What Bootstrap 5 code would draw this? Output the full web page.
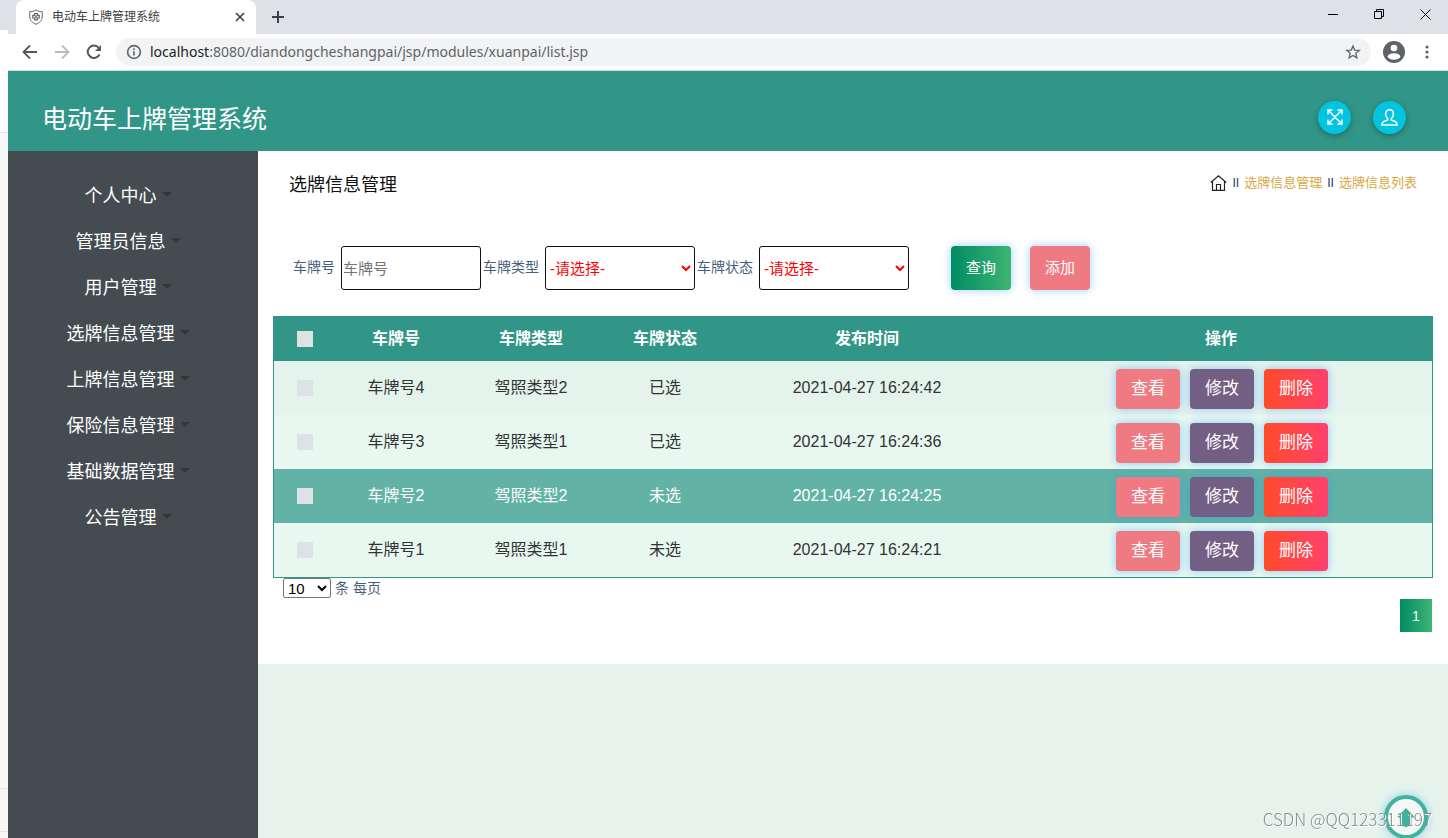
<!DOCTYPE html>
<html lang="zh-CN">
<head>
<meta charset="utf-8">
<meta name="viewport" content="width=device-width, initial-scale=1">
<title>电动车上牌管理系统</title>
<link href="https://cdn.jsdelivr.net/npm/bootstrap@5.3.0/dist/css/bootstrap.min.css" rel="stylesheet">
<style>
:root { --teal: #319687; --dark: #444c51; --mint: #e6f3ec; --slate: #475f7b; }
body { font-family: "Liberation Sans", "Noto Sans CJK SC", sans-serif; font-size: 14px; line-height: 20px; color: var(--slate); background: #fff; overflow: hidden; }
button { border: 0; background: none; padding: 0; }
a { text-decoration: none; }
svg { display: block; }

/* window behind, showing at the left edge */
.edge-strip { width: 8px; background: #f5f7f9; }
.edge-top { height: 30px; background: #dee1e6; }
.edge-mid { height: 103px; background: #fff; border-bottom: 1px solid #e3e5e8; }
.edge-low { height: 44px; margin-bottom: 6px; border-top: 1px solid #e0e2e4; border-bottom: 1px solid #e0e2e4; }

/* browser frame */
.tab-strip { height: 34px; background: #dee1e6; }
.page-tab { width: 240px; margin-left: 8px; padding: 0 11px 0 12px; background: #fff; border-radius: 8px 8px 0 0; font-size: 12px; color: #3c4043; }
.win-btn { width: 46px; height: 29px; display: grid; place-items: center; }
.tool-row { height: 36px; padding: 0 15px 0 14px; background: #fff; }
.address-box { height: 28px; border-radius: 14px; background: #f1f3f4; font-family: "Noto Sans", sans-serif; padding: 0 10px; margin: 0 8px 0 14px; }
.address-box span { font-size: 14px; color: #5f6368; }
.address-box b { font-weight: 400; color: #202124; }

/* application */
.app-head { height: 81px; background: var(--teal); border-top: 1px solid #d5dcdd; padding: 0 42px 0 34px; }
.app-title { font-size: 25px; line-height: 36px; color: #fff; margin: 16px 0 0; font-weight: 400; }
.head-tools { gap: 22px; }
.round-btn { width: 33px; height: 33px; border-radius: 50%; background: #00c4e0; box-shadow: 0 2px 6px rgba(0,0,0,.3); display: grid; place-items: center; margin-top: 12px; }
.side-menu { width: 250px; background: var(--dark); padding-top: 22px; }
.side-menu a { height: 46px; color: #fff; font-size: 18px; line-height: 46px; padding-right: 10px; }
.side-menu a::after { color: #31383b; margin-left: 5px; border-top-width: 5px; border-left-width: 5px; border-right-width: 5px; }
.main-area { background: var(--mint); }
.content-panel { background: #fff; padding: 20px 15px 32px; }
.panel-title { font-size: 18px; line-height: 28px; font-weight: 400; color: #111; margin: 0; }
.crumbs { font-size: 13px; line-height: 24px; color: #1c3b6b; padding-right: 16px; gap: 5px; }
.crumbs a { color: #d9a740; }
.search-row { margin-top: 47px; padding-left: 20px; height: 44px; }
.search-row label { padding-bottom: 2px; }
.field-box { height: 44px; border: 1px solid #111; border-radius: 3px; font-size: 15px; background: #fff; margin: 0 2px 0 6px; }
.field-box::placeholder { color: #757575; }
.text-field { width: 140px; padding: 1px; }
.pick-field { width: 150px; color: red; }
.search-acts { gap: 19px; padding-left: 40px; }
.row-acts { gap: 10px; padding-left: 2px; }
.act-btn { color: #fff; border-radius: 4px; box-shadow: 0 0 8px rgba(30,144,255,.45); }
.act-btn.top-size { width: 60px; height: 44px; font-size: 15px; }
.act-btn.row-size { width: 64px; height: 40px; font-size: 17px; }
.fill-green { background: linear-gradient(90deg, #008b63, #3fb573); }
.fill-pink { background: #f07a82; }
.fill-plum { background: #735f84; }
.fill-red { background: linear-gradient(90deg, #ff4b2b, #ff416c); }
.plate-table { table-layout: fixed; width: 100%; border: 1px solid var(--teal); border-collapse: separate; border-spacing: 0; margin-top: 26px; font-size: 16px; line-height: 24px; color: #333; text-align: center; }
.plate-table th { background: var(--teal); color: #fff; height: 44px; padding: 0; }
.plate-table td { height: 54px; padding: 0; background: #e8f8f0; }
.plate-table td:last-child { padding: 8px 0 6px; }
.plate-table tr.odd-row td { background: #e5f3ed; }
.plate-table tr.hot-row td { background: #62b3a5; color: #fff; }
.plate-table input { appearance: none; display: block; width: 16px; height: 16px; background: #dee1e6; margin: 0 auto; }
.pager-size { padding-left: 10px; }
.size-pick { height: 20px; width: 48px; border: 1px solid #767676; border-radius: 2px; background: #fff; color: #000; font-size: 15px; line-height: 18px; }
.page-num { width: 32px; height: 33px; color: #fff; margin: 1px 1px 0 0; }
.to-top { position: fixed; right: 20px; bottom: -1px; width: 44px; height: 44px; border-radius: 50%; border: 4px solid #40b39c; background: #f5f7f5; box-shadow: 0 0 8px rgba(30,144,255,.45); display: grid; place-items: center; }
.stamp { position: fixed; right: 16px; bottom: 8px; font-family: "Noto Sans CJK SC", sans-serif; font-size: 17px; font-weight: 300; line-height: 22px; color: #858c8b; text-shadow: 1px 1px 0 #fff; }
</style>
</head>
<body>
<div class="d-flex vh-100">
  <div class="edge-strip flex-shrink-0 d-flex flex-column"><div class="edge-top"></div><div class="edge-mid"></div><div class="edge-low mt-auto"></div></div>
  <div class="flex-grow-1 d-flex flex-column">

    <div class="tab-strip d-flex">
      <div class="page-tab d-flex align-items-center">
        <svg width="16" height="16" viewBox="0 0 16 16" fill="none" stroke="#5f6368"><path d="M8 .8C6 2.300 4 2.700 1.800 2.700V8c0 3.600 2.800 5.800 6.200 7.300 3.400-1.500 6.200-3.700 6.200-7.300V2.700C12 2.700 10 2.300 8 .8z"/><path d="M6.700 4.500h2.600v1.900h1.900V9H9.300v1.900H6.700V9H4.800V6.400h1.900z" stroke-width="1.200"/><circle cx="8" cy="7.700" r=".8"/></svg>
        <span class="ms-2">电动车上牌管理系统</span>
        <button class="ms-auto" aria-label="关闭标签"><svg width="10" height="10" viewBox="0 0 10 10" stroke="#3c4043" stroke-width="1.600"><path d="M1 1l8 8M9 1l-8 8"/></svg></button>
      </div>
      <button class="ms-3" aria-label="新标签"><svg width="12" height="12" viewBox="0 0 12 12" stroke="#3c4043" stroke-width="2"><path d="M6 0v12M0 6h12"/></svg></button>
      <div class="ms-auto d-flex">
        <button class="win-btn" aria-label="最小化"><svg width="11" height="11" viewBox="0 0 11 11" stroke="#000"><path d="M0 5.500h10"/></svg></button>
        <button class="win-btn" aria-label="还原"><svg width="11" height="11" viewBox="0 0 11 11" fill="none" stroke="#000"><path d="M.5 2.500h7v7h-7zM2.500 2.500v-2h7v7h-2"/></svg></button>
        <button class="win-btn" aria-label="关闭"><svg width="11" height="11" viewBox="0 0 11 11" stroke="#000"><path d="M.5.5l10 10M10.500.5l-10 10"/></svg></button>
      </div>
    </div>

    <div class="tool-row d-flex align-items-center">
      <button aria-label="后退"><svg width="16" height="16" viewBox="0 0 16 16" fill="none" stroke="#54585c" stroke-width="1.800"><path d="M15 8H2M8 1.500L1.500 8 8 14.500"/></svg></button>
      <button class="ms-3" aria-label="前进"><svg width="16" height="16" viewBox="0 0 16 16" fill="none" stroke="#babcbe" stroke-width="1.800"><path d="M1 8h13M8 1.500L14.500 8 8 14.500"/></svg></button>
      <button class="ms-3" aria-label="刷新"><svg width="16" height="16" viewBox="0 0 16 16" fill="none" stroke="#54585c" stroke-width="2"><path d="M13.500 10.500A6.200 6.200 0 1 1 12.800 4"/><path d="M15 1v6H9z" fill="#54585c" stroke="none"/></svg></button>
      <div class="address-box flex-grow-1 d-flex align-items-center">
        <svg width="16" height="16" viewBox="0 0 16 16" fill="none" stroke="#5f6368" stroke-width="1.600"><circle cx="8" cy="8" r="6.400"/><path d="M8 7.200v4.200M8 4.300v1.700"/></svg>
        <span class="ms-2"><b>localhost</b>:8080/diandongcheshangpai/jsp/modules/xuanpai/list.jsp</span>
        <button class="ms-auto" aria-label="收藏"><svg width="16" height="16" viewBox="0 0 16 16" fill="none" stroke="#5f6368" stroke-width="1.300"><path d="M8 1.900l1.700 4.200 4.600.3-3.500 2.900 1.100 4.500L8 11.400l-3.900 2.400 1.100-4.500-3.500-2.900 4.600-.3z"/></svg></button>
      </div>
      <button class="ms-1" aria-label="账户"><svg width="22" height="22" viewBox="0 0 22 22"><circle cx="11" cy="11" r="11" fill="#5f6368"/><circle cx="11" cy="7" r="3.300" fill="#fff"/><ellipse cx="11" cy="15.500" rx="6.300" ry="3.300" fill="#fff"/></svg></button>
      <button class="ms-3 px-1" aria-label="菜单"><svg width="4" height="14" viewBox="0 0 4 14" fill="#5f6368"><circle cx="2" cy="2" r="1.600"/><circle cx="2" cy="7" r="1.600"/><circle cx="2" cy="12" r="1.600"/></svg></button>
    </div>

    <header class="app-head d-flex align-items-center justify-content-between">
      <h1 class="app-title">电动车上牌管理系统</h1>
      <div class="head-tools d-flex">
        <button class="round-btn" aria-label="全屏"><svg width="16" height="16" viewBox="0 0 16 16" fill="none" stroke="#fff" stroke-width="1.500"><path d="M1 5.500V1h4.500M10.500 1H15v4.500M15 10.500V15h-4.500M5.500 15H1v-4.500M1 1l14 14M15 1L1 15"/></svg></button>
        <button class="round-btn" aria-label="用户"><svg width="17" height="17" viewBox="0 0 17 17" fill="none" stroke="#fff" stroke-width="1.500"><path d="M6.700 9.300C5.200 8.200 4.600 6.500 4.600 4.800c0-2.300 1.600-4 3.900-4s3.900 1.700 3.900 4c0 1.700-.6 3.400-2.100 4.500v1.700l4.400 1.800c1 .5 1.400 1.300 1.500 3.200H.8c.1-1.900.5-2.700 1.500-3.200L6.700 11z"/></svg></button>
      </div>
    </header>

    <div class="d-flex flex-grow-1">
      <nav class="side-menu flex-shrink-0 d-flex flex-column">
        <a href="#" class="dropdown-toggle text-center">个人中心</a>
        <a href="#" class="dropdown-toggle text-center">管理员信息</a>
        <a href="#" class="dropdown-toggle text-center">用户管理</a>
        <a href="#" class="dropdown-toggle text-center">选牌信息管理</a>
        <a href="#" class="dropdown-toggle text-center">上牌信息管理</a>
        <a href="#" class="dropdown-toggle text-center">保险信息管理</a>
        <a href="#" class="dropdown-toggle text-center">基础数据管理</a>
        <a href="#" class="dropdown-toggle text-center">公告管理</a>
      </nav>

      <main class="main-area flex-grow-1">
        <section class="content-panel">
          <div class="d-flex justify-content-between ps-3">
            <h2 class="panel-title">选牌信息管理</h2>
            <div class="crumbs d-flex">
              <a href="#" class="pt-1" aria-label="首页"><svg width="17" height="16" viewBox="0 0 17 16" fill="none" stroke="#222" stroke-width="1.200"><path d="M.8 7.500l7.700-6.700 7.700 6.700M2.500 6.200v9.200h12V6.200M6.500 15.400V9.500h4v5.900"/></svg></a>
              <span>ǀǀ</span><a href="#">选牌信息管理</a><span>ǀǀ</span><a href="#">选牌信息列表</a>
            </div>
          </div>

          <form class="search-row d-flex align-items-center">
            <label for="plate">车牌号</label>
            <input id="plate" class="field-box text-field" type="text" placeholder="车牌号">
            <label for="kind">车牌类型</label>
            <select id="kind" class="field-box pick-field"><option>-请选择-</option></select>
            <label for="state">车牌状态</label>
            <select id="state" class="field-box pick-field"><option>-请选择-</option></select>
            <div class="search-acts d-flex">
              <button type="button" class="act-btn top-size fill-green">查询</button>
              <button type="button" class="act-btn top-size fill-pink">添加</button>
            </div>
          </form>

          <table class="plate-table">
            <colgroup><col width="62"><col width="120"><col width="150"><col width="118"><col width="286"><col width="422"></colgroup>
            <thead><tr><th><input type="checkbox" aria-label="全选"></th><th>车牌号</th><th>车牌类型</th><th>车牌状态</th><th>发布时间</th><th>操作</th></tr></thead>
            <tbody>
              <tr class="odd-row"><td><input type="checkbox" aria-label="选择车牌号4"></td><td>车牌号4</td><td>驾照类型2</td><td>已选</td><td>2021-04-27 16:24:42</td>
                <td><div class="row-acts d-flex justify-content-center"><button class="act-btn row-size fill-pink">查看</button><button class="act-btn row-size fill-plum">修改</button><button class="act-btn row-size fill-red">删除</button></div></td></tr>
              <tr><td><input type="checkbox" aria-label="选择车牌号3"></td><td>车牌号3</td><td>驾照类型1</td><td>已选</td><td>2021-04-27 16:24:36</td>
                <td><div class="row-acts d-flex justify-content-center"><button class="act-btn row-size fill-pink">查看</button><button class="act-btn row-size fill-plum">修改</button><button class="act-btn row-size fill-red">删除</button></div></td></tr>
              <tr class="hot-row"><td><input type="checkbox" aria-label="选择车牌号2"></td><td>车牌号2</td><td>驾照类型2</td><td>未选</td><td>2021-04-27 16:24:25</td>
                <td><div class="row-acts d-flex justify-content-center"><button class="act-btn row-size fill-pink">查看</button><button class="act-btn row-size fill-plum">修改</button><button class="act-btn row-size fill-red">删除</button></div></td></tr>
              <tr><td><input type="checkbox" aria-label="选择车牌号1"></td><td>车牌号1</td><td>驾照类型1</td><td>未选</td><td>2021-04-27 16:24:21</td>
                <td><div class="row-acts d-flex justify-content-center"><button class="act-btn row-size fill-pink">查看</button><button class="act-btn row-size fill-plum">修改</button><button class="act-btn row-size fill-red">删除</button></div></td></tr>
            </tbody>
          </table>

          <div class="pager-size d-flex align-items-center gap-1">
            <select id="per" class="size-pick"><option>10</option></select>
            <label for="per">条 每页</label>
          </div>
          <div class="d-flex justify-content-end"><button class="page-num fill-green">1</button></div>
        </section>
      </main>
    </div>
  </div>
</div>
<button class="to-top" aria-label="返回顶部"><svg width="18" height="19" viewBox="0 0 18 19" fill="#40b39c"><path d="M9 0l9 9.500h-3.500V19h-11V9.500H0z"/></svg></button>
<div class="stamp">CSDN @QQ123311197</div>
<script src="https://cdn.jsdelivr.net/npm/bootstrap@5.3.0/dist/js/bootstrap.bundle.min.js"></script>
</body>
</html>
